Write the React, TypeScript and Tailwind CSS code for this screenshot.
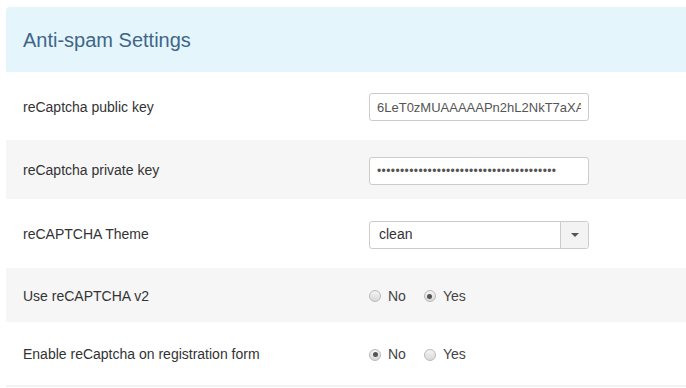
import React from "react";

const font = { fontFamily: '"Liberation Sans", Arial, sans-serif' };

const Radio = ({ checked, label }: { checked?: boolean; label: string }) => (
  <label className="flex items-center gap-[7px]">
    <span className="flex h-[12px] w-[12px] items-center justify-center rounded-full border border-[#b9b9b9] bg-gradient-to-b from-[#f4f4f4] to-[#d9d9d9]">
      {checked && <span className="h-[5px] w-[5px] rounded-full bg-[#555]" />}
    </span>
    <span className="text-[14px] text-[#444]">{label}</span>
  </label>
);

const Row = ({
  label,
  gray,
  h,
  children,
}: {
  label: string;
  gray?: boolean;
  h: string;
  children: React.ReactNode;
}) => (
  <div className={`flex items-center pt-[2px] ${h} ${gray ? "bg-[#f6f6f6]" : "bg-white"}`}>
    <div className="w-[363px] pl-[17px] text-[14px] text-[#333]">{label}</div>
    <div className="flex items-center">{children}</div>
  </div>
);

export default function App() {
  return (
    <div className="w-[686px] h-[388px] overflow-hidden bg-white pl-[6px] pt-[7px]" style={font}>
      <div className="w-[700px]">
        {/* header */}
        <div className="flex h-[65px] items-center rounded-tl-[4px] bg-[#e4f5fc] pl-[17px]">
          <h2 className="text-[20px] text-[#3f6689]">Anti-spam Settings</h2>
        </div>

        <Row label="reCaptcha public key" h="h-[68px]">
          <input
            readOnly
            value="6LeT0zMUAAAAAPn2hL2NkT7aXA1234567"
            className="h-[28px] w-[220px] rounded-[3px] border border-[#ccc] bg-white px-[7px] text-[13px] text-[#555] outline-none"
            style={font}
          />
        </Row>

        <Row label="reCaptcha private key" gray h="h-[59px]">
          <input
            readOnly
            type="password"
            value="abcdefghijklmnopqrstuvwxyzabcdefghijklm"
            className="h-[28px] w-[220px] rounded-[3px] border border-[#ccc] bg-white px-[7px] text-[12px] tracking-[0.4px] text-[#555] outline-none"
            style={font}
          />
        </Row>

        <Row label="reCAPTCHA Theme" h="h-[69px]">
          <div className="flex h-[28px] w-[220px] overflow-hidden rounded-[3px] border border-[#ccc] bg-white">
            <div className="flex flex-1 items-center pl-[9px] text-[14px] text-[#333]">clean</div>
            <div className="flex w-[28px] items-center justify-center border-l border-[#ccc] bg-[#f3f3f3]">
              <span className="h-0 w-0 border-x-[4px] border-t-[4px] border-x-transparent border-t-[#555]" />
            </div>
          </div>
        </Row>

        <Row label="Use reCAPTCHA v2" gray h="h-[54px]">
          <div className="flex items-center gap-[18px]">
            <Radio label="No" />
            <Radio checked label="Yes" />
          </div>
        </Row>

        <Row label="Enable reCaptcha on registration form" h="h-[63px]">
          <div className="flex items-center gap-[18px]">
            <Radio checked label="No" />
            <Radio label="Yes" />
          </div>
        </Row>
        <div className="h-[2px] bg-[#f2f2f2]" />
      </div>
    </div>
  );
}
